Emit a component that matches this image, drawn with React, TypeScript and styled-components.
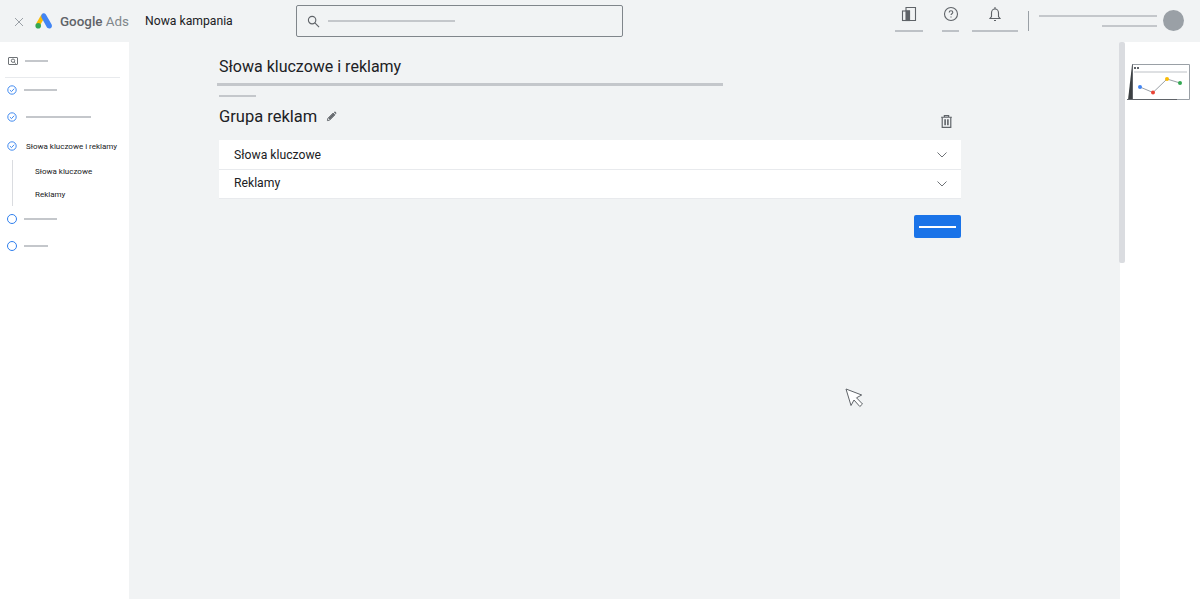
import { createGlobalStyle } from 'styled-components';
import styled from 'styled-components';

const GlobalStyle = createGlobalStyle`
  html, body {
    margin: 0;
    padding: 0;
    background: #ffffff;
  }
  body {
    font-family: Roboto, "Liberation Sans", sans-serif;
    color: #202124;
  }
  * {
    box-sizing: border-box;
  }
`;

function App() {
  return (
    <>
      <GlobalStyle />
      <Page>
        <Header>
          <CloseIcon viewBox="0 0 10 10">
            <path d="M1 1l8 8M9 1l-8 8" />
          </CloseIcon>
          <Logo viewBox="0 0 18 16">
            <path d="M6.4 1.6 1.2 10.6l3.6 2.2 5.2-9z" fill="#fbbc04" />
            <path d="M6.6 1.7c1-1.7 3.2-1.8 4.3-.2l5.6 9.8c.9 1.7.3 3.2-1 3.9-1.4.7-3 .3-3.8-1.1L6.6 4.8c-.5-1-.5-2.1 0-3.1z" fill="#4285f4" />
            <circle cx="3.2" cy="12.8" r="2.8" fill="#34a853" />
          </Logo>
          <Brand>
            <strong>Google</strong> Ads
          </Brand>
          <CampaignName>Nowa kampania</CampaignName>
          <SearchBox>
            <SearchIcon viewBox="0 0 14 14">
              <circle cx="5.5" cy="5.5" r="4" />
              <path d="M8.5 8.5 13 13" />
            </SearchIcon>
            <Bar $width={127} $color="#c4c7cb" />
          </SearchBox>
          <HeaderTools>
            <ToolItem $width={28}>
              <ToolIcon viewBox="0 0 16 16">
                <rect x="1.5" y="5" width="7" height="9.5" />
                <path d="M5 5V1.5h9.5v13H8.5" />
                <rect x="5" y="5" width="3.5" height="9.5" fill="#5f6368" />
              </ToolIcon>
              <Bar $width={28} $color="#bdc1c6" />
            </ToolItem>
            <ToolItem $width={17}>
              <ToolIcon viewBox="0 0 16 16">
                <circle cx="8" cy="8" r="6.5" />
                <path d="M6.2 6.4c0-1 .8-1.7 1.8-1.7s1.8.7 1.8 1.6c0 1.4-1.8 1.4-1.8 2.8" />
                <path d="M8 10.6v1" />
              </ToolIcon>
              <Bar $width={17} $color="#bdc1c6" />
            </ToolItem>
            <ToolItem $width={46}>
              <ToolIcon viewBox="0 0 16 16">
                <path d="M3 12.5h10l-1.500-2V7c0-2.200-1.500-4-3.500-4S4.500 4.800 4.500 7v3.500z" />
                <path d="M8 1v2M7 14.500h2" />
              </ToolIcon>
              <Bar $width={46} $color="#bdc1c6" />
            </ToolItem>
            <ToolDivider />
            <Account>
              <AccountLines>
                <Bar $width={118} $color="#c4c7cb" />
                <Bar $width={55} $color="#c4c7cb" />
              </AccountLines>
              <Avatar />
            </Account>
          </HeaderTools>
        </Header>
        <Body>
          <Sidebar>
            <NavTop>
              <PreviewIcon viewBox="0 0 10 8">
                <rect x="0.5" y="0.5" width="9" height="7" rx="0.5" />
                <circle cx="5" cy="3.7" r="1.7" />
                <path d="M6.2 5 7.8 6.6" />
              </PreviewIcon>
              <Bar $width={23} $color="#c4c7cb" />
            </NavTop>
            <NavRow $height={24}>
              <CheckIcon />
              <Bar $width={33} $color="#c4c7cb" />
            </NavRow>
            <NavRow $height={30}>
              <CheckIcon />
              <Bar $width={65} $color="#c4c7cb" $shift={2} />
            </NavRow>
            <NavRow $height={28}>
              <CheckIcon />
              <NavLabel>Słowa kluczowe i reklamy</NavLabel>
            </NavRow>
            <SubNav>
              <SubItem>Słowa kluczowe</SubItem>
              <SubItem>Reklamy</SubItem>
            </SubNav>
            <NavRow $height={26}>
              <StepCircle />
              <Bar $width={33} $color="#c4c7cb" />
            </NavRow>
            <NavRow $height={28}>
              <StepCircle />
              <Bar $width={24} $color="#c4c7cb" />
            </NavRow>
          </Sidebar>
          <Main>
            <PageTitle>Słowa kluczowe i reklamy</PageTitle>
            <TitleRule />
            <Bar $width={37} $color="#c4c7cb" />
            <GroupHead>
              <GroupTitle>Grupa reklam</GroupTitle>
              <PencilIcon viewBox="0 0 12 12">
                <path d="M1.5 10.5 2 8l5.8-5.8 2 2L4 10z" fill="none" stroke="#5f6368" strokeWidth="1" />
                <path d="M2.5 8 8 2.5l1.5 1.5L4 9.5z" fill="#5f6368" />
                <path d="M8.6 1.4 9.3.8c.3-.3.6-.3.9 0l1 1c.3.3.3.6 0 .9l-.6.7z" fill="#5f6368" />
              </PencilIcon>
              <TrashIcon viewBox="0 0 12 14">
                <path d="M1 3h10M4 3V1.5h4V3" />
                <path d="M2 3v9.5h8V3" />
                <path d="M4.7 5v5.5M7.3 5v5.5" strokeWidth="1.5" />
              </TrashIcon>
            </GroupHead>
            <Panel>
              <PanelRow>
                Słowa kluczowe
                <Chevron viewBox="0 0 10 6">
                  <path d="M.5.5 5 5 9.5.5" />
                </Chevron>
              </PanelRow>
              <PanelRow>
                Reklamy
                <Chevron viewBox="0 0 10 6">
                  <path d="M.5.5 5 5 9.5.5" />
                </Chevron>
              </PanelRow>
            </Panel>
            <Actions>
              <PrimaryButton>
                <Bar $width={37} $color="#ffffff" />
              </PrimaryButton>
            </Actions>
            <Pointer viewBox="0 0 19 20">
              <path d="M1 1l5 16.5 3-5.5 5.8 6.5 2.700-2.500-6-6.200 5.200-2.800z" />
            </Pointer>
          </Main>
          <RightPanel>
            <ScrollThumb />
            <ChartIcon viewBox="0 0 64 38">
              <path d="M5 1.5h57.5v35H5z" fill="#ffffff" stroke="none" />
              <path d="M1 37 5 2v35z" fill="#3c4043" />
              <path d="M5 1.5h57.5v35H50" fill="none" stroke="#9aa0a6" strokeWidth="1" />
              <path d="M5.5 1.5V36.5M0 36.5h50" fill="none" stroke="#5f6368" strokeWidth="1" />
              <path d="M7 9h53" stroke="#bdc1c6" strokeWidth="1" />
              <rect x="7" y="4" width="2" height="2" fill="#5f6368" />
              <rect x="10" y="4" width="2" height="2" fill="#5f6368" />
              <path d="M13 24l13 5.5 14-13.500 13 4" fill="none" stroke="#9aa0a6" strokeWidth="1" />
              <circle cx="13" cy="24" r="2" fill="#4285f4" />
              <circle cx="26" cy="29.5" r="2" fill="#ea4335" />
              <circle cx="40" cy="16" r="2" fill="#fbbc04" />
              <circle cx="53" cy="20" r="2" fill="#34a853" />
            </ChartIcon>
          </RightPanel>
        </Body>
      </Page>
    </>
  );
}

export default App;

function CheckIcon() {
  return (
    <CheckSvg viewBox="0 0 10 10">
      <circle cx="5" cy="5" r="4.2" />
      <path d="M2.9 5.1 4.5 6.6 7.2 3.7" />
    </CheckSvg>
  );
}

const Page = styled.div`
  display: flex;
  flex-direction: column;
  width: 1200px;
  height: 600px;
  overflow: hidden;
  background-color: #ffffff;
`;

const Header = styled.header`
  display: flex;
  align-items: center;
  flex: none;
  height: 42px;
  padding-left: 14px;
  background-color: #f1f3f4;
`;

const CloseIcon = styled.svg`
  width: 10px;
  height: 10px;
  margin-top: 1px;
  fill: none;
  stroke: #9aa0a6;
  stroke-width: 1;
`;

const Logo = styled.svg`
  width: 18px;
  height: 16px;
  margin-left: 11px;
`;

const Brand = styled.div`
  width: 70px;
  margin-left: 7px;
  font-size: 13.4px;
  white-space: nowrap;
  color: #80868b;

  strong {
    font-weight: 500;
    color: #5f6368;
  }
`;

const CampaignName = styled.div`
  width: 88px;
  margin-left: 15px;
  font-size: 12.2px;
  white-space: nowrap;
  color: #202124;
`;

const SearchBox = styled.div`
  display: flex;
  align-items: center;
  gap: 8px;
  width: 327px;
  height: 32px;
  margin-left: 63px;
  padding-left: 10px;
  border: 1px solid #80868b;
  border-radius: 2px;
`;

const SearchIcon = styled.svg`
  width: 13px;
  height: 13px;
  fill: none;
  stroke: #5f6368;
  stroke-width: 1.2;
`;

const Bar = styled.div<{ $width: number; $color: string; $shift?: number }>`
  flex: none;
  width: ${(props) => props.$width}px;
  height: 2px;
  margin-left: ${(props) => props.$shift || 0}px;
  background-color: ${(props) => props.$color};
`;

const HeaderTools = styled.div`
  display: flex;
  align-items: flex-start;
  flex: 1;
  justify-content: flex-end;
  height: 42px;
  padding-top: 6px;
  padding-right: 16px;
`;

const ToolItem = styled.div<{ $width: number }>`
  display: flex;
  flex-direction: column;
  align-items: center;
  gap: 8px;
  width: ${(props) => props.$width}px;
  margin-right: 19px;

  &:nth-child(2) {
    margin-right: 13px;
  }
  &:nth-child(3) {
    margin-right: 10px;
  }
`;

const ToolIcon = styled.svg`
  width: 16px;
  height: 16px;
  fill: none;
  stroke: #5f6368;
  stroke-width: 1.1;
`;

const ToolDivider = styled.div`
  width: 1px;
  height: 20px;
  margin-top: 5px;
  background-color: #9aa0a6;
`;

const Account = styled.div`
  display: flex;
  align-items: center;
  gap: 6px;
  margin-left: 10px;
  margin-top: 4px;
`;

const AccountLines = styled.div`
  display: flex;
  flex-direction: column;
  align-items: flex-end;
  gap: 8px;
`;

const Avatar = styled.div`
  width: 21px;
  height: 21px;
  border-radius: 50%;
  background-color: #9aa0a6;
`;

const Body = styled.div`
  display: flex;
  flex: 1;
  min-height: 0;
  padding-bottom: 1px;
`;

const Sidebar = styled.nav`
  flex: none;
  width: 129px;
  background-color: #ffffff;
`;

const NavTop = styled.div`
  display: flex;
  align-items: center;
  gap: 7px;
  height: 36px;
  margin: 0 9px 0 5px;
  padding-left: 3px;
  padding-top: 3px;
  border-bottom: 1px solid #e8eaed;
`;

const PreviewIcon = styled.svg`
  width: 10px;
  height: 8px;
  fill: none;
  stroke: #5f6368;
  stroke-width: 0.9;
`;

const NavRow = styled.div<{ $height: number }>`
  display: flex;
  align-items: center;
  gap: 7px;
  height: ${(props) => props.$height}px;
  padding-left: 7px;
`;

const CheckSvg = styled.svg`
  flex: none;
  width: 10px;
  height: 10px;
  fill: none;
  stroke: #2f7fee;
  stroke-width: 0.9;
`;

const StepCircle = styled.div`
  flex: none;
  width: 10px;
  height: 10px;
  border: 1px solid #2f7fee;
  border-radius: 50%;
`;

const NavLabel = styled.div`
  margin-left: 2px;
  font-size: 8px;
  white-space: nowrap;
  color: #202124;
`;

const SubNav = styled.div`
  display: flex;
  flex-direction: column;
  margin-left: 12px;
  padding: 0 0 0 22px;
  border-left: 1px solid #dadce0;
`;

const SubItem = styled.div`
  height: 23px;
  padding-top: 7px;
  font-size: 8px;
  color: #202124;
`;

const Main = styled.main`
  position: relative;
  display: flex;
  flex-direction: column;
  flex: none;
  width: 991px;
  padding: 15px 159px 0 90px;
  align-items: flex-start;
  background-color: #f1f3f4;
`;

const PageTitle = styled.h1`
  margin: 0;
  font-size: 16px;
  font-weight: 400;
  line-height: 20px;
  color: #202124;
`;

const TitleRule = styled.div`
  width: 506px;
  height: 3px;
  margin: 6px 0 9px -2px;
  background-color: #c4c7cb;
`;

const GroupHead = styled.div`
  display: flex;
  align-items: center;
  align-self: stretch;
  height: 42px;
  margin-top: 1px;
`;

const GroupTitle = styled.h2`
  margin: 0 0 6px;
  font-size: 16.5px;
  font-weight: 400;
  color: #202124;
`;

const PencilIcon = styled.svg`
  width: 11px;
  height: 11px;
  margin: 0 0 6px 9px;
`;

const TrashIcon = styled.svg`
  width: 13px;
  height: 15px;
  margin: 4px 8px 0 auto;
  fill: none;
  stroke: #5f6368;
  stroke-width: 1.1;
`;

const Panel = styled.div`
  align-self: stretch;
  background-color: #ffffff;
  border-bottom: 1px solid #e8eaed;
`;

const PanelRow = styled.div`
  display: flex;
  align-items: center;
  justify-content: space-between;
  height: 29px;
  padding: 0 14px 0 15px;
  font-size: 12.2px;
  color: #202124;

  & + & {
    padding-bottom: 3px;
    border-top: 1px solid #e8eaed;
  }
  & + & svg {
    margin-top: 3px;
  }
`;

const Chevron = styled.svg`
  width: 10px;
  height: 6px;
  fill: none;
  stroke: #5f6368;
  stroke-width: 0.9;
`;

const Actions = styled.div`
  display: flex;
  justify-content: flex-end;
  align-self: stretch;
  margin-top: 16px;
`;

const PrimaryButton = styled.button`
  display: flex;
  align-items: center;
  justify-content: center;
  width: 47px;
  height: 23px;
  padding: 0;
  border: none;
  border-radius: 2px;
  background-color: #1a73e8;
`;

const Pointer = styled.svg`
  position: absolute;
  left: 716px;
  top: 346px;
  width: 19px;
  height: 20px;
  fill: #ffffff;
  stroke: #5f6368;
  stroke-width: 1;
`;

const RightPanel = styled.aside`
  position: relative;
  flex: 1;
  padding: 21px 0 0 7px;
  background-color: #ffffff;
`;

const ScrollThumb = styled.div`
  position: absolute;
  left: -1px;
  top: 0;
  width: 6px;
  height: 221px;
  border-radius: 2px;
  background-color: #dadce0;
`;

const ChartIcon = styled.svg`
  display: block;
  width: 64px;
  height: 38px;
`;
